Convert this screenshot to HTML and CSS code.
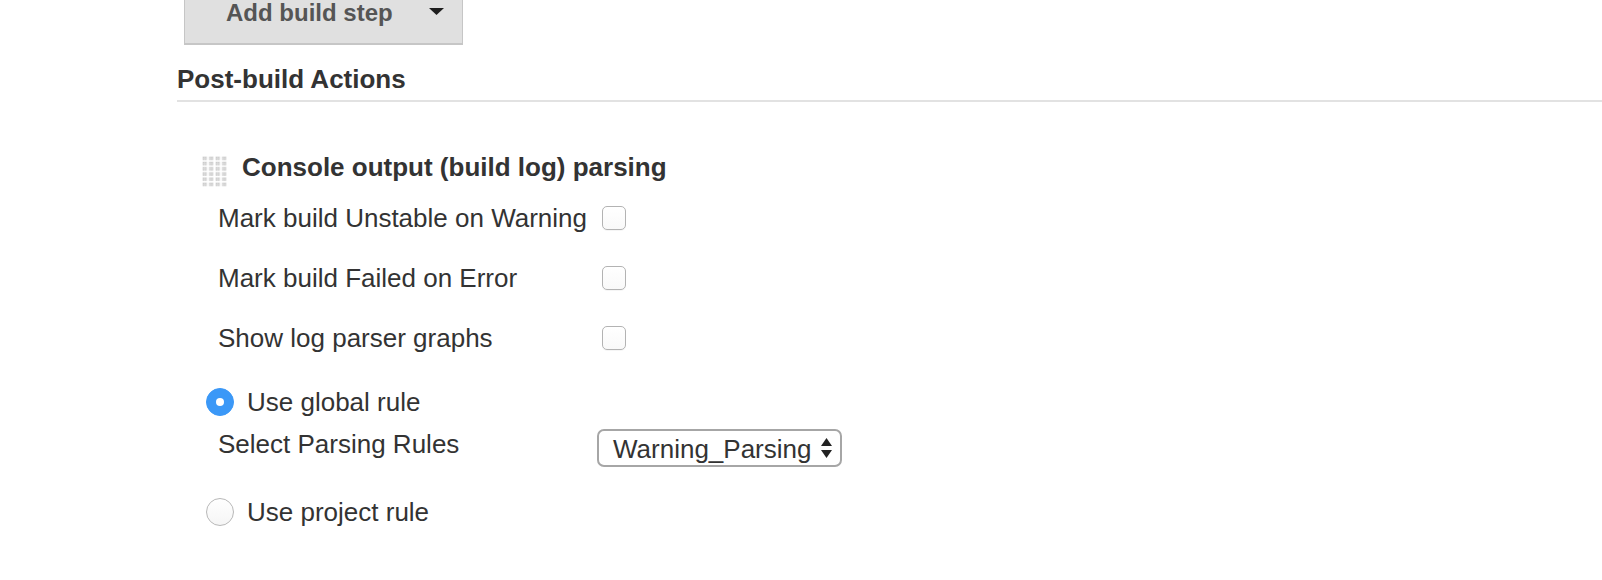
FILE: index.html
```html
<!DOCTYPE html>
<html>
<head>
<meta charset="utf-8">
<link rel="stylesheet" href="styles.css">
</head>
<body>
<div class="main">
  <div class="add-btn">
    <span class="add-label">Add build step</span>
    <svg class="caret" width="15" height="7" viewBox="0 0 15 7"><path d="M0 0H15L7.5 7Z" fill="#1e1e1e"/></svg>
  </div>
  <h2 class="section-title">Post-build Actions</h2>
  <div class="section">
    <div class="section-head">
      <svg class="grip" width="26" height="31" viewBox="0 0 26 31">
        <defs>
          <pattern id="dots" width="6.5" height="5.2" patternUnits="userSpaceOnUse">
            <rect x="0.5" y="0.5" width="4.5" height="3.6" fill="#dcdcdc"/>
            <rect x="1" y="1" width="1" height="1" fill="#c4c4c4"/>
            <rect x="3" y="1" width="1" height="1" fill="#c4c4c4"/>
            <rect x="1" y="3" width="1" height="1" fill="#c4c4c4"/>
            <rect x="3" y="3" width="1" height="1" fill="#c4c4c4"/>
          </pattern>
        </defs>
        <rect width="26" height="31" fill="url(#dots)"/>
      </svg>
      <span class="head-text">Console output (build log) parsing</span>
    </div>
    <div class="opt">
      <span class="opt-label">Mark build Unstable on Warning</span>
      <span class="checkbox"></span>
    </div>
    <div class="opt">
      <span class="opt-label">Mark build Failed on Error</span>
      <span class="checkbox"></span>
    </div>
    <div class="opt">
      <span class="opt-label">Show log parser graphs</span>
      <span class="checkbox"></span>
    </div>
    <div class="radio-row first">
      <span class="radio checked"></span>
      <span class="radio-label">Use global rule</span>
    </div>
    <div class="select-row">
      <span class="sel-label">Select Parsing Rules</span>
      <div class="select">
        <span class="sel-text">Warning_Parsing</span>
        <svg class="sel-arrows" width="11" height="20" viewBox="0 0 11 20"><path d="M5.5 0L11 8H0Z" fill="#222"/><path d="M0 12H11L5.5 20Z" fill="#222"/></svg>
      </div>
    </div>
    <div class="radio-row second">
      <span class="radio"></span>
      <span class="radio-label">Use project rule</span>
    </div>
  </div>
</div>
</body>
</html>
```

FILE: styles.css
```css
html, body {
  margin: 0;
  padding: 0;
  background: #fff;
}
body {
  font-family: "Liberation Sans", Helvetica, Arial, sans-serif;
  color: #333;
  overflow: hidden;
}
.main {
  padding-left: 177px;
}
.add-btn {
  margin-top: -20px;
  margin-left: 7px;
  width: 279px;
  box-sizing: border-box;
  padding: 18px 18px 16px 41px;
  background: #e0e0e0;
  border: 1px solid #c6c6c6;
  border-bottom-width: 2px;
  display: flex;
  align-items: center;
}
.add-label {
  font-weight: bold;
  font-size: 24px;
  line-height: 28px;
  color: #555;
}
.caret {
  margin-left: auto;
  margin-top: -4px;
}
.section-title {
  margin: 19px 0 0 0;
  font-size: 26px;
  line-height: 30px;
  font-weight: bold;
  color: #333;
  padding-bottom: 6px;
  border-bottom: 2px solid #e2e2e2;
}
.section {
  padding-left: 25px;
  margin-top: 50px;
}
.section-head {
  display: flex;
  align-items: flex-start;
  height: 30px;
}
.grip {
  margin-top: 4px;
  flex: none;
}
.head-text {
  margin-left: 14px;
  font-size: 26px;
  line-height: 30px;
  font-weight: bold;
  color: #333;
}
.opt {
  display: flex;
  align-items: center;
  height: 60px;
  padding-left: 16px;
}
.section-head + .opt {
  margin-top: 6px;
}
.opt-label, .sel-label, .radio-label {
  font-size: 26px;
  line-height: 30px;
  color: #333;
}
.opt-label {
  width: 384px;
  flex: none;
}
.checkbox {
  width: 22px;
  height: 22px;
  border: 1px solid #b3b3b3;
  border-radius: 5px;
  background: linear-gradient(#fff, #f9f9f9);
  box-shadow: 0 1px 0 rgba(0,0,0,0.04);
}
.radio-row {
  display: flex;
  align-items: center;
  height: 48px;
  padding-left: 4px;
}
.radio-row.first {
  margin-top: 10px;
}
.radio-row.second {
  margin-top: 21px;
}
.radio {
  width: 26px;
  height: 26px;
  border-radius: 50%;
  border: 1px solid #b8b8b8;
  background: linear-gradient(#fff, #f5f5f5);
  flex: none;
  display: flex;
  align-items: center;
  justify-content: center;
}
.radio.checked {
  background: #3b98f7;
  border-color: #3b98f7;
}
.radio.checked::after {
  content: "";
  width: 8px;
  height: 8px;
  border-radius: 50%;
  background: #fff;
}
.radio-label {
  margin-left: 13px;
}
.select-row {
  display: flex;
  align-items: flex-start;
  padding-left: 16px;
  margin-top: 3px;
  height: 38px;
}
.sel-label {
  width: 379px;
  flex: none;
}
.select {
  width: 245px;
  height: 38px;
  box-sizing: border-box;
  border: 2px solid #a6a6a6;
  border-radius: 7px;
  background: #fff;
  display: flex;
  align-items: center;
  padding-left: 14px;
}
.sel-text {
  font-size: 26px;
  line-height: 30px;
  color: #333;
  margin-top: 2px;
}
.sel-arrows {
  margin-left: auto;
  margin-right: 8px;
}
```
